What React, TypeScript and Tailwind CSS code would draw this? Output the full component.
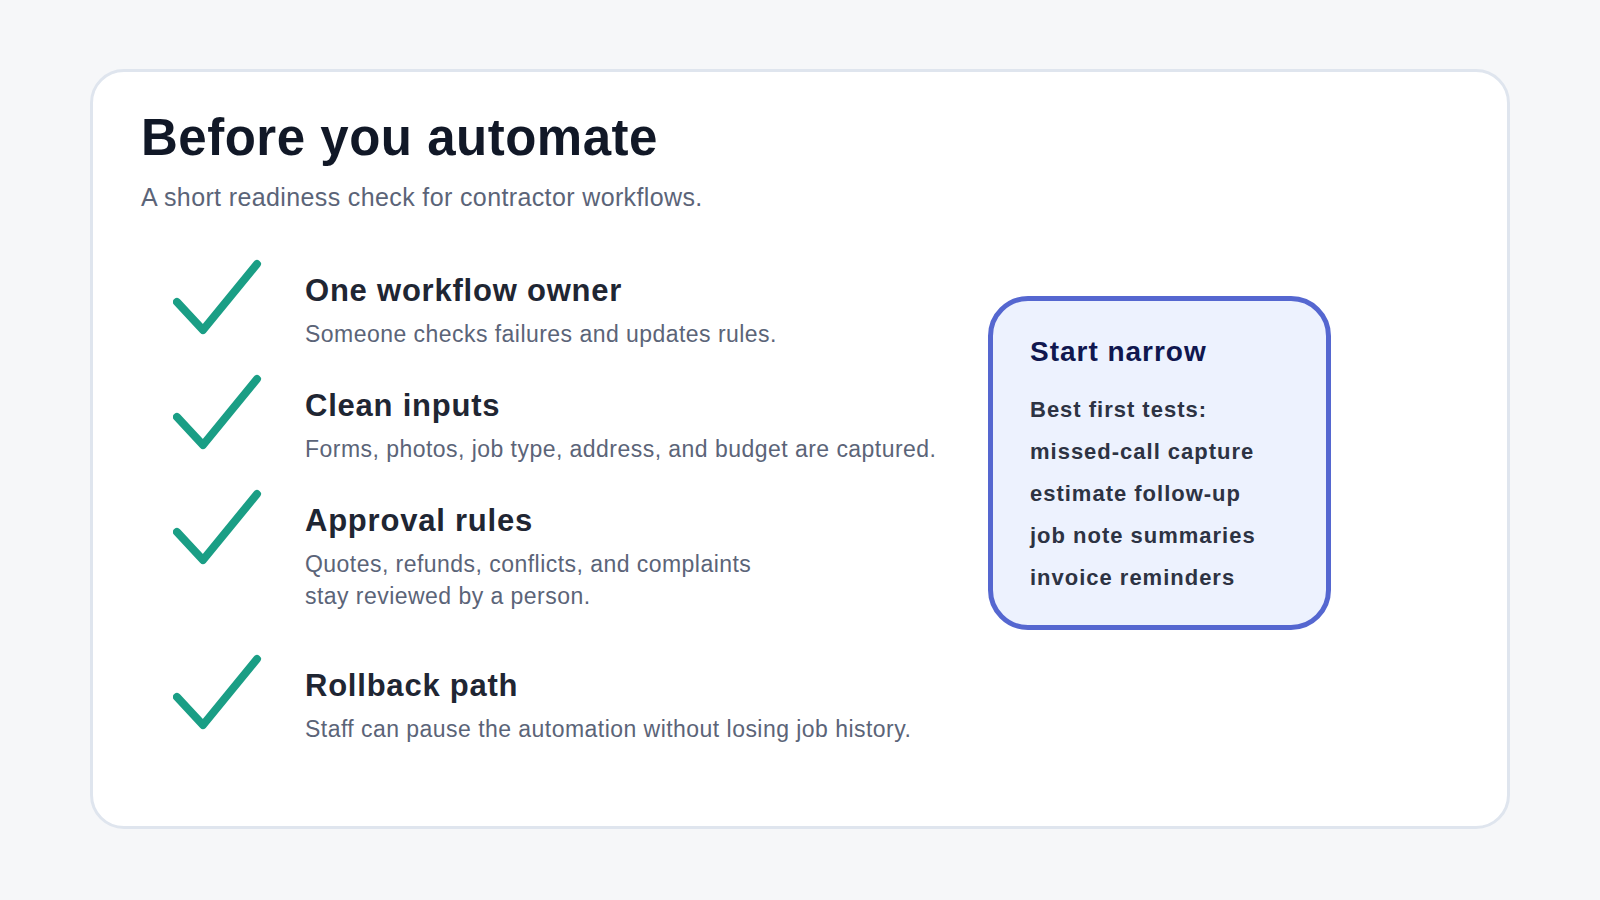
export default function App() {
  const items = [
    { h: "One workflow owner", d: ["Someone checks failures and updates rules."], hh: "h-[115px]" },
    { h: "Clean inputs", d: ["Forms, photos, job type, address, and budget are captured."], hh: "h-[115px]" },
    { h: "Approval rules", d: ["Quotes, refunds, conflicts, and complaints", "stay reviewed by a person."], hh: "h-[165px]" },
    { h: "Rollback path", d: ["Staff can pause the automation without losing job history."], hh: "h-[115px]" },
  ];
  return (
    <div className="w-[1600px] h-[900px] bg-[#f6f7f9] pt-[69px] pl-[90px]" style={{ fontFamily: '"Liberation Sans", Arial, sans-serif' }}>
      <div className="w-[1420px] h-[760px] bg-white border-[3px] border-[#dfe5ee] rounded-[34px] pl-[48px] pt-[36px]">
        <h1 className="text-[51px] leading-[60px] font-bold text-[#111827] tracking-[0.01em]">Before you automate</h1>
        <p className="text-[25px] leading-[30px] text-[#5b6478] mt-[14px] tracking-[0.015em]">A short readiness check for contractor workflows.</p>
        <div className="flex mt-[47px]">
          <div className="w-[847px]">
            {items.map((it) => (
              <div key={it.h} className={`flex ${it.hh}`}>
                <svg width="90" height="80" viewBox="0 0 90 80" className="ml-[32px] shrink-0">
                  <path d="M4 43 L30 71 L84 5" fill="none" stroke="#1a9e85" strokeWidth="8" strokeLinecap="round" strokeLinejoin="round" />
                </svg>
                <div className="ml-[42px] pt-[14px]">
                  <div className="text-[31px] leading-[36px] font-bold text-[#1f2633] tracking-[0.025em]">{it.h}</div>
                  <div className="mt-[9px] text-[23px] leading-[32px] text-[#5b6478] tracking-[0.02em]">
                    {it.d.map((l) => (<div key={l}>{l}</div>))}
                  </div>
                </div>
              </div>
            ))}
          </div>
          <div className="mt-[37px] self-start w-[343px] bg-[#edf2fe] border-[5px] border-[#5567d0] rounded-[40px] pl-[37px] pt-[33px] pb-[26px]">
            <div className="text-[28px] leading-[36px] font-bold text-[#10174f] tracking-[0.035em]">Start narrow</div>
            <div className="mt-[19px] text-[22px] leading-[42px] font-bold text-[#2d3343] tracking-[0.045em]">
              <div>Best first tests:</div>
              <div>missed-call capture</div>
              <div>estimate follow-up</div>
              <div>job note summaries</div>
              <div>invoice reminders</div>
            </div>
          </div>
        </div>
      </div>
    </div>
  );
}
